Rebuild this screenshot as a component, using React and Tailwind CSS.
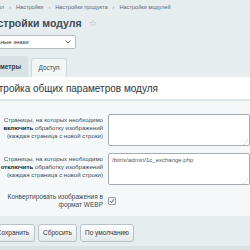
import React from 'react';

const font = { fontFamily: '"Liberation Sans", Arial, sans-serif' };

const Crumbs = () => (
  <div className="flex items-center h-[14px] -ml-[31px] text-[5.6px] text-[#5a6b7b] whitespace-nowrap">
    <span>Рабочий стол</span>
    <span className="mx-[5px] text-[#8a99a6]">›</span>
    <span>Настройки</span>
    <span className="mx-[5px] text-[#8a99a6]">›</span>
    <span>Настройки продукта</span>
    <span className="mx-[5px] text-[#8a99a6]">›</span>
    <span>Настройки модулей</span>
  </div>
);

const Field = ({ action, value }) => (
  <div className="flex items-start h-[32px]">
    <div className="w-[140px] -ml-[37px] shrink-0 pt-[2px] text-right text-[6.1px] leading-[8px] text-[#3f4b54] whitespace-nowrap">
      Страницы, на которых необходимо
      <br />
      <b className="text-[#222]">{action}</b> обработку изображений
      <br />
      (каждая страница с новой строки)
    </div>
    <div className="ml-[5px] flex-1 h-[32px] bg-white border border-[#a3acb2] rounded-[2px] px-[3px] py-[2px] text-[6px] text-[#555] relative">
      {value}
      <span className="absolute right-[1px] bottom-[0px] text-[5px] leading-none text-[#999]">⋰</span>
    </div>
  </div>
);

export default function App() {
  return (
    <div style={font} className="w-[250px] h-[250px] overflow-hidden bg-[#e6edef] flex flex-col">
      <Crumbs />
      <div className="flex items-center h-[20px] -ml-[16px] whitespace-nowrap">
        <span className="text-[10.5px] font-bold text-[#3e4a52]">Настройки модуля</span>
        <span className="ml-[7px] text-[9px] text-[#9aa6ad]">☆</span>
      </div>
      <div className="mt-[1px] -ml-[32px] w-[108px] h-[14px] bg-white border border-[#b5bdc2] rounded-[2px] flex items-center justify-between px-[4px] text-[6px] text-[#333]">
        <span className="whitespace-nowrap">Специальные знаки</span>
        <svg width="6" height="4" viewBox="0 0 6 4"><path d="M0.5 0.5 L3 3 L5.5 0.5" stroke="#555" strokeWidth="0.9" fill="none" /></svg>
      </div>
      <div className="flex items-end h-[28px]">
        <div className="-ml-[23px] w-[51px] h-[21px] flex items-center justify-center bg-[#d8e1e4] rounded-t-[3px] text-[6.5px] font-bold text-[#2f3a40]">Параметры</div>
        <div className="ml-[3px] w-[36px] h-[19px] flex items-center justify-center bg-[#f3f6f7] border border-b-0 border-[#cfd8dc] rounded-t-[3px] text-[6.5px] text-[#3a464d]">Доступ</div>
      </div>
      <div className="flex flex-col">
        <div className="h-[22px] bg-white flex items-center -ml-[19px] text-[10px] text-[#2d373d] whitespace-nowrap">
          Настройка общих параметров модуля
        </div>
        <div className="h-[2px] bg-[#dfe6e9]" />
        <div className="h-[115px] bg-[#f5f8f9] pt-[13px] flex flex-col gap-[7px]">
          <Field action="включить" />
          <Field action="отключить" value="/bitrix/admin/1c_exchange.php" />
          <div className="flex items-center mt-[1px]">
            <div className="w-[103px] shrink-0 text-right text-[6.5px] leading-[8px] text-[#3f4b54] whitespace-nowrap">
              Конвертировать изображения в
              <br />
              формат WEBP
            </div>
            <div className="ml-[5px] w-[8px] h-[8px] bg-[#eef1f2] border border-[#9aa3a8] rounded-[1px] flex items-center justify-center">
              <svg width="6" height="6" viewBox="0 0 6 6"><path d="M1 3 L2.5 4.5 L5 1.2" stroke="#556" strokeWidth="0.9" fill="none" /></svg>
            </div>
          </div>
        </div>
      </div>
      <div className="flex items-center gap-[3px] mt-[8px] h-[18px]">
        <button className="-ml-[9px] w-[44px] h-[18px] bg-gradient-to-b from-white to-[#e3e9eb] border border-[#b9c3c7] rounded-[3px] text-[6.5px] text-[#333]">Сохранить</button>
        <button className="w-[39px] h-[18px] bg-gradient-to-b from-white to-[#e3e9eb] border border-[#b9c3c7] rounded-[3px] text-[6.5px] text-[#333]">Сбросить</button>
        <button className="w-[54px] h-[18px] bg-gradient-to-b from-white to-[#e3e9eb] border border-[#b9c3c7] rounded-[3px] text-[6.5px] text-[#333]">По умолчанию</button>
      </div>
      <div className="mt-[4px] flex-1 bg-[#d9e2e5]" />
    </div>
  );
}
